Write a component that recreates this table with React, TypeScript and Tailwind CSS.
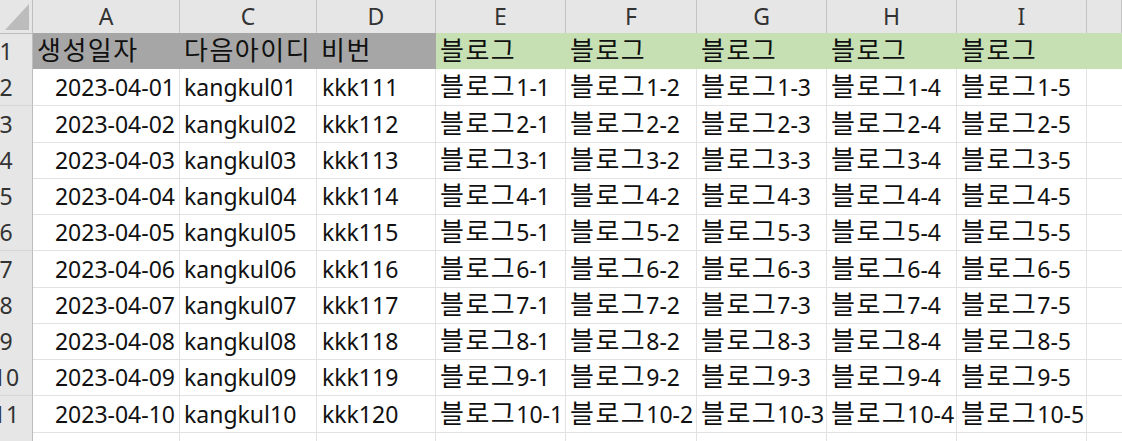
import React from "react"

const COLS = "grid grid-cols-[33px_147px_137px_119px_130px_131px_130px_130px_130px_1fr]"

const letters = ["A", "C", "D", "E", "F", "G", "H", "I", ""]

const rows = [
    { n: 2, h: "h-[37px]" },
    { n: 3, h: "h-[36px]" },
    { n: 4, h: "h-[36px]" },
    { n: 5, h: "h-[36px]" },
    { n: 6, h: "h-[37px]" },
    { n: 7, h: "h-[36px]" },
    { n: 8, h: "h-[36px]" },
    { n: 9, h: "h-[36px]" },
    { n: 10, h: "h-[37px]" },
    { n: 11, h: "h-[36px]" },
]

function pad(n: number) {
    return n < 10 ? "0" + n : String(n)
}

function Txt({ text }: { text: string }) {
    const parts = text.match(/[\uac00-\ud7a3\u3131-\u318e]+|[^\uac00-\ud7a3\u3131-\u318e]+/g) ?? []
    return (
        <>
            {parts.map((p, i) =>
                /[\uac00-\ud7a3]/.test(p) ? (
                    <span key={i} className="text-[26px] leading-none tracking-[1.5px]">
                        {p}
                    </span>
                ) : (
                    <span key={i}>{p}</span>
                )
            )}
        </>
    )
}

function RowHead({ n }: { n: number }) {
    return (
        <div className="overflow-hidden border-r border-b border-r-[#bdbdbd] border-b-[#d6d6d6] bg-[#e6e6e6] text-[#333]">
            <div className="flex w-[12px] justify-center whitespace-nowrap">{n}</div>
        </div>
    )
}

export default function App() {
    return (
        <div
            className="h-[441px] w-[1122px] overflow-hidden bg-white text-[23px] leading-[36px] text-[#111]"
            style={{ fontFamily: "'Noto Sans', 'Noto Sans CJK KR', sans-serif" }}
        >
            {/* column letters */}
            <div className={`${COLS} h-[33px] bg-[#e6e6e6] leading-[33px] text-[#333]`}>
                <div className="relative border-r border-b border-[#bdbdbd]">
                    <svg className="absolute right-[3px] bottom-[3px]" width="24" height="26" viewBox="0 0 24 26">
                        <polygon points="24,0 24,26 0,26" fill="#bcbcbc" />
                    </svg>
                </div>
                {letters.map((l, i) => (
                    <div key={i} className="border-r border-b border-[#c4c4c4] text-center">
                        {l}
                    </div>
                ))}
            </div>

            {/* row 1: title row */}
            <div className={`${COLS} h-[36px]`}>
                <RowHead n={1} />
                <div className="whitespace-nowrap border-b border-white bg-[#a6a6a6] pl-[4px]">
                    <Txt text="생성일자" />
                </div>
                <div className="whitespace-nowrap border-b border-white bg-[#a6a6a6] pl-[4px]">
                    <Txt text="다음아이디" />
                </div>
                <div className="whitespace-nowrap border-b border-white bg-[#a6a6a6] pl-[4px]">
                    <Txt text="비번" />
                </div>
                {[0, 1, 2, 3, 4].map((i) => (
                    <div key={i} className="whitespace-nowrap border-b border-white bg-[#c6e0b4] pl-[4px]">
                        <Txt text="블로그" />
                    </div>
                ))}
                <div className="border-b border-white bg-[#c6e0b4]" />
            </div>

            {rows.map(({ n, h }) => {
                const i = n - 1
                return (
                    <div key={n} className={`${COLS} ${h}`}>
                        <RowHead n={n} />
                        <div className="whitespace-nowrap border-r border-b border-[#e2e2e2] pr-[4px] text-right">
                            2023-04-{pad(i)}
                        </div>
                        <div className="whitespace-nowrap border-r border-b border-[#e2e2e2] pl-[4px]">
                            kangkul{pad(i)}
                        </div>
                        <div className="whitespace-nowrap border-r border-b border-[#e2e2e2] pl-[5px]">
                            kkk{110 + i}
                        </div>
                        {[1, 2, 3, 4, 5].map((k) => (
                            <div key={k} className="overflow-visible whitespace-nowrap border-r border-b border-[#e2e2e2] pl-[4px]">
                                <Txt text={`블로그${i}-${k}`} />
                            </div>
                        ))}
                        <div className="border-b border-[#e2e2e2]" />
                    </div>
                )
            })}

            {/* partial row 12 */}
            <div className={`${COLS} h-[9px]`}>
                <div className="border-r border-[#bdbdbd] bg-[#e6e6e6]" />
                {letters.map((l, i) => (
                    <div key={i} className={i < 8 ? "border-r border-[#e2e2e2]" : ""} />
                ))}
            </div>
        </div>
    )
}
